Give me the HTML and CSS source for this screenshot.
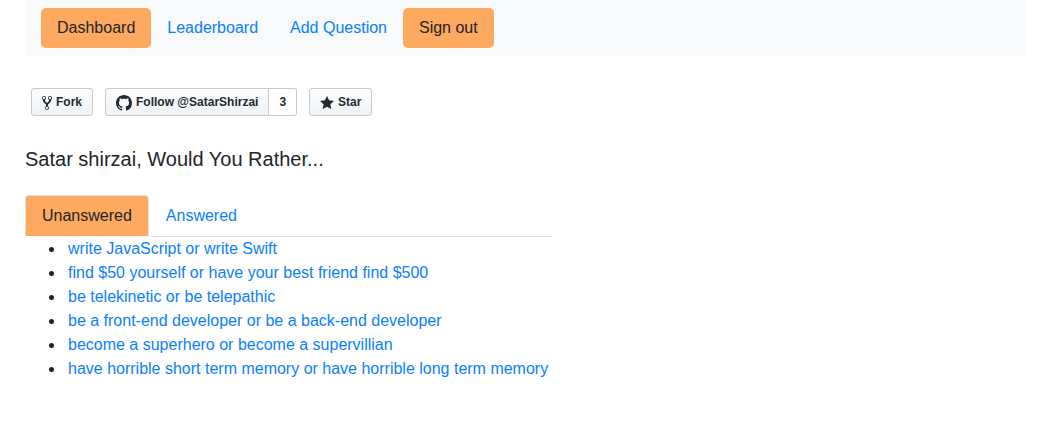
FILE: index.html
```html
<!DOCTYPE html>
<html lang="en">
<head>
<meta charset="utf-8">
<meta name="viewport" content="width=device-width, initial-scale=1">
<title>Would You Rather</title>
<link rel="stylesheet" href="styles.css">
</head>
<body>
<div class="page">
  <nav class="navbar">
    <a class="nav-link active" href="#dashboard">Dashboard</a>
    <a class="nav-link" href="#leaderboard">Leaderboard</a>
    <a class="nav-link" href="#add">Add Question</a>
    <button class="nav-link active" type="button">Sign out</button>
  </nav>

  <div class="github">
    <a class="gh-button" href="#fork">
      <svg width="10" height="16" viewBox="0 0 10 16" aria-hidden="true"><path fill-rule="evenodd" d="M8 1a1.993 1.993 0 0 0-1 3.72V6L5 8 3 6V4.72A1.993 1.993 0 0 0 2 1a1.993 1.993 0 0 0-1 3.72V6.5l3 3v1.78A1.993 1.993 0 0 0 5 15a1.993 1.993 0 0 0 1-3.72V9.5l3-3V4.72A1.993 1.993 0 0 0 8 1zM2 4.2C1.34 4.2.8 3.65.8 3c0-.65.55-1.2 1.2-1.2.65 0 1.2.55 1.2 1.2 0 .65-.55 1.2-1.2 1.2zm3 10c-.66 0-1.2-.55-1.2-1.2 0-.65.55-1.2 1.2-1.2.65 0 1.2.55 1.2 1.2 0 .65-.55 1.2-1.2 1.2zm3-10c-.66 0-1.2-.55-1.2-1.2 0-.65.55-1.2 1.2-1.2.65 0 1.2.55 1.2 1.2 0 .65-.55 1.2-1.2 1.2z"/></svg>
      <span>Fork</span>
    </a>
    <div class="gh-group">
      <a class="gh-button" href="#follow">
        <svg width="16" height="16" viewBox="0 0 16 16" aria-hidden="true"><path fill-rule="evenodd" d="M8 0C3.58 0 0 3.58 0 8c0 3.54 2.29 6.53 5.47 7.59.4.07.55-.17.55-.38 0-.19-.01-.82-.01-1.49-2.01.37-2.53-.49-2.69-.94-.09-.23-.48-.94-.82-1.13-.28-.15-.68-.52-.01-.53.63-.01 1.08.58 1.23.82.72 1.21 1.87.87 2.33.66.07-.52.28-.87.51-1.07-1.78-.2-3.64-.89-3.64-3.95 0-.87.31-1.59.82-2.15-.08-.2-.36-1.02.08-2.12 0 0 .67-.21 2.2.82.64-.18 1.32-.27 2-.27.68 0 1.36.09 2 .27 1.53-1.04 2.2-.82 2.2-.82.44 1.1.16 1.92.08 2.12.51.56.82 1.27.82 2.15 0 3.07-1.87 3.75-3.65 3.95.29.25.54.73.54 1.48 0 1.07-.01 1.93-.01 2.2 0 .21.15.46.55.38A8.013 8.013 0 0 0 16 8c0-4.42-3.58-8-8-8z"/></svg>
        <span>Follow @SatarShirzai</span>
      </a>
      <a class="gh-count" href="#followers" aria-label="3 followers">3</a>
    </div>
    <a class="gh-button" href="#star">
      <svg width="14" height="16" viewBox="0 0 14 16" aria-hidden="true"><path d="M14 6l-4.9-.64L7 1 4.9 5.36 0 6l3.6 3.26L2.67 14 7 11.67 11.33 14l-.93-4.74L14 6z"/></svg>
      <span>Star</span>
    </a>
  </div>

  <main>
    <h1 class="title">Satar shirzai, Would You Rather...</h1>
    <div class="questions">
      <div class="tabs" role="tablist">
        <a class="tab selected" href="#unanswered" role="tab" aria-selected="true">Unanswered</a>
        <a class="tab" href="#answered" role="tab" aria-selected="false">Answered</a>
      </div>
      <ul class="list">
        <li><a href="#q1">write JavaScript or write Swift</a></li>
        <li><a href="#q2">find $50 yourself or have your best friend find $500</a></li>
        <li><a href="#q3">be telekinetic or be telepathic</a></li>
        <li><a href="#q4">be a front-end developer or be a back-end developer</a></li>
        <li><a href="#q5">become a superhero or become a supervillian</a></li>
        <li><a href="#q6">have horrible short term memory or have horrible long term memory</a></li>
      </ul>
    </div>
  </main>
</div>
</body>
</html>
```
FILE: styles.css
```css
* {
  box-sizing: border-box;
}

body {
  margin: 0;
  background: #fff;
  color: #212529;
  font: 16px/24px "Liberation Sans", Arial, sans-serif;
}

a {
  color: #0a80ff;
  text-decoration: none;
}

.page {
  padding: 0 32px 0 25px;
}

.navbar {
  display: flex;
  flex-wrap: wrap;
  padding: 8px 16px;
  background: #f7f9fb;
}

.nav-link {
  padding: 8px 16px;
  border: 0;
  border-radius: 5px;
  background: none;
  font: inherit;
}

.nav-link.active {
  background: #ffa85f;
  color: #212529;
}

.github {
  display: flex;
  flex-wrap: wrap;
  gap: 12px;
  padding: 32px 6px;
}

.gh-group {
  display: flex;
}

.gh-button,
.gh-count {
  display: flex;
  align-items: center;
  gap: 4px;
  height: 28px;
  padding: 0 10px;
  border: 1px solid #c5c9cc;
  border-radius: 3px;
  color: #24292e;
  font-size: 12px;
  font-weight: 700;
  line-height: 16px;
}

.gh-button {
  background: linear-gradient(#fcfcfc, #eef3f6);
}

.gh-button svg {
  margin-top: 2px;
  fill: currentColor;
}

.gh-button span,
.gh-count {
  padding-bottom: 1px;
}

.gh-group .gh-button {
  border-radius: 3px 0 0 3px;
}

.gh-count {
  border-left: 0;
  border-radius: 0 3px 3px 0;
}

.title {
  margin: 0 0 24px;
  font-size: 20px;
  font-weight: 400;
  line-height: 23px;
}

.questions {
  width: fit-content;
}

.tabs {
  display: flex;
  border-bottom: 1px solid #dee2e6;
}

.tab {
  margin-bottom: -1px;
  padding: 8px 16px;
  border: 1px solid transparent;
  border-radius: 4px 4px 0 0;
}

.tab.selected {
  border-color: #dee2e6 #dee2e6 #fff;
  background: #ffa85f;
  color: #212529;
}

.list {
  margin: 0;
  padding: 0 0 16px 40px;
}

.list a {
  padding: 0 4px 0 3px;
}
```
